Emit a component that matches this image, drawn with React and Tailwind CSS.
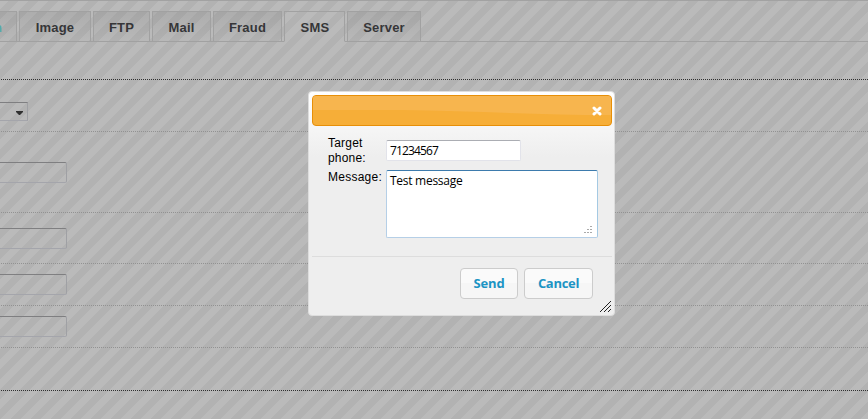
import React from 'react';

const INPUT = 'h-[21px] w-[67px] shrink-0 border border-l-0 border-t-[#7f7f81] border-r-[#9fa0a4] border-b-[#a4a5ab] rounded-r-[2px]';

function Gap() {
  return <div className="w-[2px] self-stretch border-b border-[#a1a1a1]" />;
}

function Tab({ label, width, active }) {
  return (
    <div
      className={`${width} h-[31px] shrink-0 border border-[#a1a1a1] pt-[6px] text-center text-[13px] leading-[20px] font-bold tracking-[0.2px] text-[#363638] ${
        active ? 'border-b-transparent pl-px' : 'bg-gradient-to-b from-black/7 to-black/1'
      }`}
    >
      {label}
    </div>
  );
}

function Row({ height, pad, dark, children }) {
  return (
    <div className={`${height} ${pad} relative shrink-0`}>
      {children}
      <svg className="absolute bottom-0 left-0 h-px w-full" aria-hidden="true">
        <line x1="1" y1="0.5" x2="868" y2="0.5" stroke={dark ? '#303030' : '#929292'} strokeDasharray="1 1" shapeRendering="crispEdges" />
      </svg>
    </div>
  );
}

function Page() {
  return (
    <div className="flex h-full flex-col">
      <div className="h-[42px] shrink-0 border-t border-[#a2a2a2] pt-[10px]">
        <div className="flex h-[31px] items-start">
          <div className="flex h-[31px] w-[17px] shrink-0 justify-end overflow-hidden border border-l-0 border-[#a1a1a1] bg-gradient-to-b from-black/7 to-black/1 pt-[6px] pr-[14px] text-[13px] leading-[20px] font-bold text-[#55aaa9]">
            <span>n</span>
          </div>
          <Gap />
          <Tab label="Image" width="w-[72px]" />
          <Gap />
          <Tab label="FTP" width="w-[57px]" />
          <Gap />
          <Tab label="Mail" width="w-[59px]" />
          <Gap />
          <Tab label="Fraud" width="w-[69px]" />
          <Gap />
          <Tab label="SMS" width="w-[61px]" active />
          <Gap />
          <Tab label="Server" width="w-[74px]" />
          <div className="flex-1 self-stretch border-b border-[#a1a1a1]" />
        </div>
      </div>
      <Row height="h-[38px]" pad="" dark />
      <Row height="h-[52px]" pad="pt-[22px]">
        <div className="flex h-[19px] w-[28px] items-center justify-end border border-l-0 border-t-[#7f7f81] border-r-[#9fa0a4] border-b-[#a4a5ab] pr-[4px]">
          <svg width="7" height="4" viewBox="0 0 7 4" className="mt-[2px]"><path d="M0 0h7v1L4 4H3L0 1z" fill="#303030" /></svg>
        </div>
      </Row>
      <Row height="h-[81px]" pad="pt-[30px]"><div className={INPUT} /></Row>
      <Row height="h-[51px]" pad="pt-[15px]"><div className={INPUT} /></Row>
      <Row height="h-[42px]" pad="pt-[10px]"><div className={INPUT} /></Row>
      <Row height="h-[42px]" pad="pt-[10px]"><div className={INPUT} /></Row>
      <Row height="h-[43px]" pad="" dark />
    </div>
  );
}

function Dialog() {
  return (
    <div className="absolute top-[91px] left-[308px] flex h-[225px] w-[307px] flex-col rounded-[4px] border border-[#dddddd] bg-[#eeeeee] bg-[linear-gradient(#ffffff,#eeeeee_65px)] py-[3px] pr-[2px] pl-[3px] text-black">
      <div className="relative flex h-[31px] shrink-0 items-center justify-end overflow-hidden rounded-[4px] border border-[#e78f08] bg-[#f6ae38] pr-[9px]">
        <svg className="absolute inset-0 h-full w-full" viewBox="0 0 298 29" preserveAspectRatio="none">
          <path d="M0 0H298V19C230 19 160 15 90 14H0Z" fill="#f7b54e" />
        </svg>
        <svg className="relative" width="10" height="10" viewBox="0 0 10 10">
          <path d="M2 2L8 8M8 2L2 8" stroke="#fff" strokeWidth="3" strokeLinecap="round" />
        </svg>
      </div>
      <div className="flex h-[130px] shrink-0 flex-col pt-[9px] pl-[16px]">
        <div className="flex h-[34px]">
          <div className="w-[58px] pt-px text-[12px] leading-[15px] tracking-[0.2px]">Target<br />phone:</div>
          <div className="mt-[5px] h-[21px] w-[135px] rounded-[2px] border border-[#e2e3ea] border-t-[#abadb3] bg-white pl-[3px] font-['Open_Sans'] text-[12px] leading-[20px] font-medium tracking-[-0.85px]">
            <span>71234567</span>
          </div>
        </div>
        <div className="mt-px flex">
          <div className="w-[58px] text-[12px] leading-[15px] tracking-[0.25px]">Message:</div>
          <div className="relative h-[68px] w-[212px] rounded-[2px] border border-[#b5cfe7] border-t-[#3d7bad] border-r-[#a4c9e3] bg-white pt-[2px] pl-[3px] font-['Open_Sans'] text-[12px] leading-[16px] font-medium tracking-[-0.27px]">
            <span>Test message</span>
            <svg className="absolute right-[5px] bottom-[3px]" width="8" height="8" shapeRendering="crispEdges">
              <path d="M7 0h1v1h-1zM4 3h1v1h-1zM7 3h1v1h-1zM0 6h2v1h-2zM3 6h2v1h-2zM6 6h2v1h-2zM6 0h1v1h-1zM3 3h1v1h-1zM6 3h1v1h-1z" fill="#aaa" />
            </svg>
          </div>
        </div>
      </div>
      <div className="flex shrink-0 justify-end gap-[6px] border-t border-[#dddddd] pt-[11px] pr-[19px]">
        <button className="h-[31px] w-[58px] rounded-[4px] border border-[#cccccc] bg-[linear-gradient(#fafafa_50%,#f6f6f6_50%)] font-['Open_Sans'] text-[13px] font-bold tracking-[-0.2px] text-[#1c94c4]">Send</button>
        <button className="h-[31px] w-[69px] rounded-[4px] border border-[#cccccc] bg-[linear-gradient(#fafafa_50%,#f6f6f6_50%)] font-['Open_Sans'] text-[13px] font-bold tracking-[-0.3px] text-[#1c94c4]">Cancel</button>
      </div>
      <svg className="absolute right-[3px] bottom-[3px]" width="11" height="11" viewBox="0 0 11 11">
        <path d="M0 11L11 0M4 11L11 4M8 11L11 8" stroke="#222" strokeWidth="1" fill="none" />
      </svg>
    </div>
  );
}

export default function App() {
  return (
    <div className="relative h-[419px] w-[868px] overflow-hidden bg-[repeating-linear-gradient(135deg,#bababa_0px,#bababa_7.071px,#b2b2b2_7.071px,#b2b2b2_14.142px)] font-['Liberation_Sans',Arial,sans-serif]">
      <Page />
      <Dialog />
    </div>
  );
}
